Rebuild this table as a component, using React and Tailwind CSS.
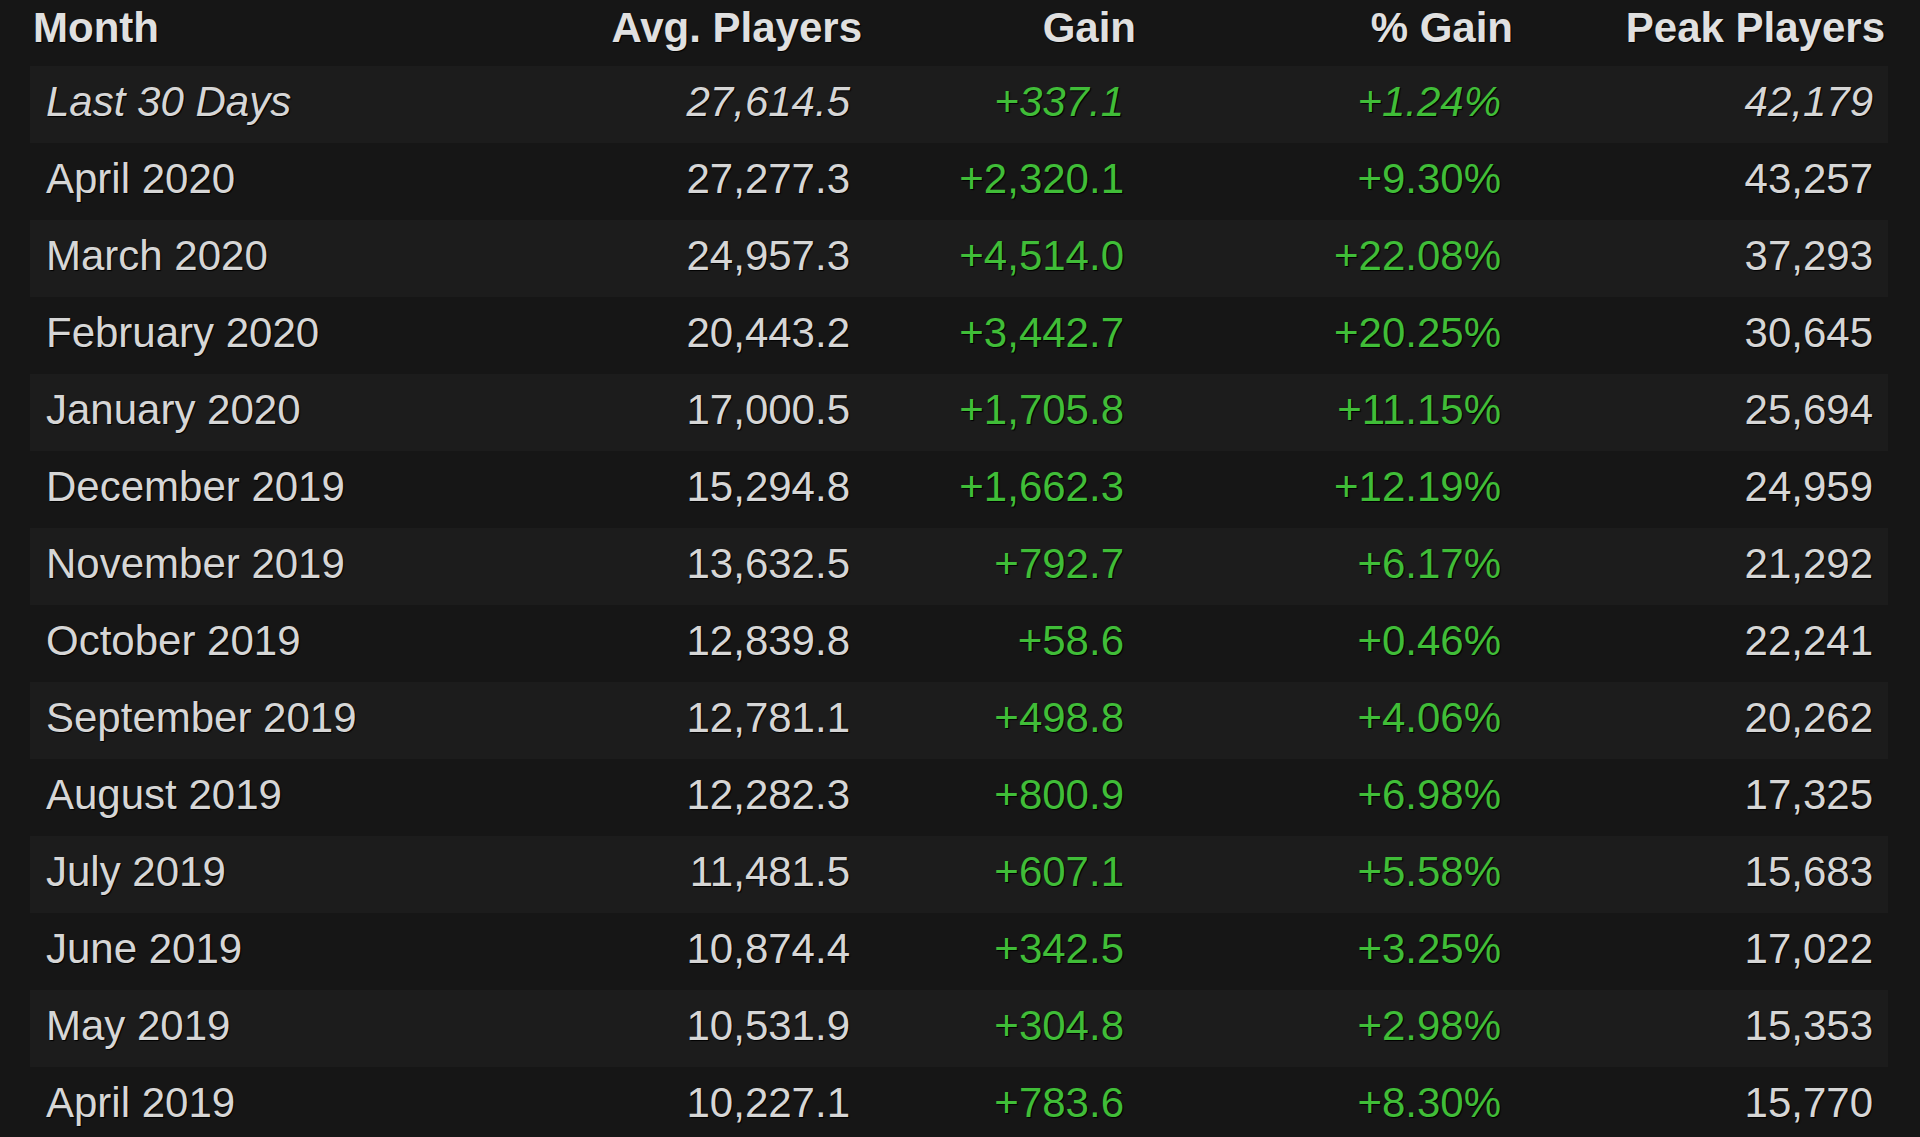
import React from "react";

const rows = [
  ["Last 30 Days", "27,614.5", "+337.1", "+1.24%", "42,179", true],
  ["April 2020", "27,277.3", "+2,320.1", "+9.30%", "43,257"],
  ["March 2020", "24,957.3", "+4,514.0", "+22.08%", "37,293"],
  ["February 2020", "20,443.2", "+3,442.7", "+20.25%", "30,645"],
  ["January 2020", "17,000.5", "+1,705.8", "+11.15%", "25,694"],
  ["December 2019", "15,294.8", "+1,662.3", "+12.19%", "24,959"],
  ["November 2019", "13,632.5", "+792.7", "+6.17%", "21,292"],
  ["October 2019", "12,839.8", "+58.6", "+0.46%", "22,241"],
  ["September 2019", "12,781.1", "+498.8", "+4.06%", "20,262"],
  ["August 2019", "12,282.3", "+800.9", "+6.98%", "17,325"],
  ["July 2019", "11,481.5", "+607.1", "+5.58%", "15,683"],
  ["June 2019", "10,874.4", "+342.5", "+3.25%", "17,022"],
  ["May 2019", "10,531.9", "+304.8", "+2.98%", "15,353"],
  ["April 2019", "10,227.1", "+783.6", "+8.30%", "15,770"],
];

const grid = "grid grid-cols-[490px_345px_274px_377px_372px]";

export default function App() {
  return (
    <div className="w-[1920px] h-[1137px] overflow-hidden bg-[#161616] text-[42px] leading-[48px] font-['Liberation_Sans',Arial,sans-serif]">
      <div className="ml-[30px] w-[1858px]">
        <div className={`${grid} h-[66px] pt-[4px] font-bold text-[#e0e0e0] [text-shadow:1px_1px_1px_#000]`}>
          <div className="px-[3px] text-left">Month</div>
          <div className="px-[3px] text-right">Avg. Players</div>
          <div className="px-[3px] text-right">Gain</div>
          <div className="px-[3px] text-right">% Gain</div>
          <div className="px-[3px] text-right">Peak Players</div>
        </div>
        {rows.map((r, i) => (
          <div
            key={r[0]}
            className={`${grid} h-[77px] pt-[12px] ${i % 2 === 0 ? "bg-[#1c1c1c]" : "bg-[#161616]"} ${r[5] ? "italic" : ""} [text-shadow:1px_1px_1px_#000]`}
          >
            <div className="pl-[16px] pr-[15px] text-left text-[#d6d6d6]">{r[0]}</div>
            <div className="pl-[16px] pr-[15px] text-right text-[#d6d6d6]">{r[1]}</div>
            <div className="pl-[16px] pr-[15px] text-right text-[#40bd38]">{r[2]}</div>
            <div className="pl-[16px] pr-[15px] text-right text-[#40bd38]">{r[3]}</div>
            <div className="pl-[16px] pr-[15px] text-right text-[#d6d6d6]">{r[4]}</div>
          </div>
        ))}
      </div>
    </div>
  );
}
